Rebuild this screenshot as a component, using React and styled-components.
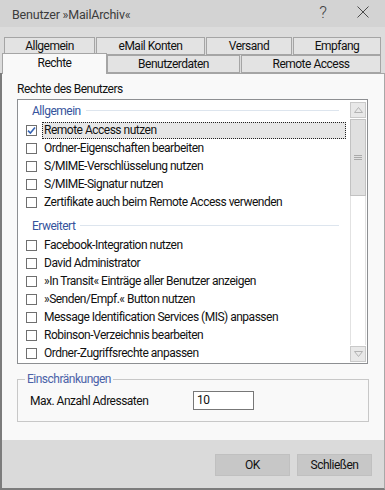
import React from 'react';
import styled, { createGlobalStyle } from 'styled-components';

const Global = createGlobalStyle`
  html, body { margin: 0; padding: 0; background: #dadada; }
  body { font-family: Roboto, "Liberation Sans", sans-serif; font-size: 12px; color: #111; letter-spacing: -0.5px; }
  * { box-sizing: border-box; }
`;

const Window = styled.div`
  width: 385px;
  height: 490px;
  display: flex;
  flex-direction: column;
  background: #dadada;
`;

const TitleBar = styled.div`
  height: 27px;
  display: flex;
  align-items: center;
  padding: 0 16px 0 12px;
  background: #d3d3d3;
  color: #3c3c3c;
  font-size: 12.5px;
  letter-spacing: -0.2px;
`;

const Title = styled.div`
  flex: 1;
  padding-top: 1px;
`;

const TitleButton = styled.div`
  width: ${p => p.$w}px;
  margin-right: ${p => p.$gap || 0}px;
  height: 27px;
  display: flex;
  align-items: center;
  justify-content: center;
  color: #444;
  font-size: 17px;
  font-weight: 300;
  padding-bottom: 3px;
`;

const TabStrip = styled.div`
  height: 46px;
  padding-top: 10px;
  display: flex;
  flex-direction: column;
  background: #dcdcdc;
`;

const TabRow = styled.div`
  display: flex;
  align-items: flex-end;
  height: 18px;
  padding-left: ${p => p.$indent}px;
  position: relative;
  z-index: ${p => p.$z};
`;

const Tab = styled.div`
  width: ${p => p.$w}px;
  margin-right: ${p => p.$gap || 0}px;
  height: ${p => (p.$active ? 21 : 18)}px;
  display: flex;
  align-items: center;
  justify-content: center;
  background: ${p => (p.$active ? '#f9f9f9' : '#e3e3e3')};
  border: 1px solid #a5a5a5;
  border-bottom: ${p => (p.$active ? 'none' : '1px solid #a5a5a5')};
  margin-bottom: ${p => (p.$active ? -1 : 0)}px;
  padding-bottom: ${p => (p.$active ? 2 : 0)}px;
  position: relative;
  z-index: ${p => (p.$active ? 2 : 1)};
`;

const Body = styled.div`
  flex: 1;
  display: flex;
  flex-direction: column;
  border-left: 2px solid #7c7c7c;
  border-right: 1px solid #a8a8a8;
  border-bottom: 2px solid #7c7c7c;
`;

const Panel = styled.div`
  height: 367px;
  background: #f9f9f9;
  border-top: 1px solid #a5a5a5;
  padding: 8px 0 0 15px;
  display: flex;
  flex-direction: column;
`;

const Caption = styled.div`
  line-height: 14px;
  height: 14px;
  margin-bottom: 3px;
`;

const ListBox = styled.div`
  width: 351px;
  height: 265px;
  border: 1px solid #8d8f92;
  background: #fff;
  display: flex;
  overflow: hidden;
`;

const List = styled.div`
  flex: 1;
  display: flex;
  flex-direction: column;
  overflow: hidden;
`;

const GroupHeader = styled.div`
  height: 21px;
  flex: none;
  margin-top: ${p => p.$top}px;
  display: flex;
  align-items: center;
  padding-left: 14px;
  padding-right: 11px;
  color: #35539c;
  line-height: 14px;
`;

const HeaderLine = styled.div`
  flex: 1;
  height: 1px;
  margin-left: 5px;
  background: #dde5ee;
`;

const Row = styled.div`
  height: 18px;
  flex: none;
  display: flex;
  align-items: center;
  padding-left: 8px;
  padding-right: 4px;
`;

const Box = styled.div`
  width: 11px;
  height: 11px;
  border: 1px solid #6f6f6f;
  background: #fff;
  flex: none;
  display: flex;
  align-items: center;
  justify-content: center;
  margin-top: 1px;
`;

const Label = styled.div`
  flex: 1;
  margin-left: 5px;
  height: 17px;
  line-height: 15px;
  padding-left: 1px;
  border: 1px dotted ${p => (p.$focus ? '#222' : 'transparent')};
  background: ${p => (p.$focus ? '#e6e6e6' : 'transparent')};
  white-space: nowrap;
`;

const ScrollBar = styled.div`
  width: 17px;
  flex: none;
  padding: 2px 1px 1px 0;
  display: flex;
  flex-direction: column;
`;

const ArrowButton = styled.div`
  height: 16px;
  flex: none;
  border: 1px solid #c9c9c9;
  background: #e8e8e8;
  display: flex;
  align-items: center;
  justify-content: center;
`;

const Track = styled.div`
  flex: 1;
  display: flex;
  flex-direction: column;
  border-left: 1px solid #e2e2e2;
  border-right: 1px solid #e2e2e2;
  margin: 1px 0;
`;

const Thumb = styled.div`
  height: 77px;
  margin: 0 -1px;
  border: 1px solid #c2c2c2;
  background: #e0e0e0;
  display: flex;
  align-items: center;
  justify-content: center;
`;

const Fieldset = styled.fieldset`
  margin: 8px 0 0 0;
  width: 352px;
  border: 1px solid #c8c8c8;
  padding: 5px 12px 11px 12px;
  display: flex;
  align-items: center;
`;

const Legend = styled.legend`
  color: #4b62a8;
  padding: 0 2px;
  margin-left: -5px;
  line-height: 14px;
`;

const FieldLabel = styled.div`
  width: 163px;
  line-height: 14px;
`;

const Input = styled.div`
  width: 61px;
  height: 19px;
  border: 1px solid #777;
  background: #fff;
  padding-left: 3px;
  line-height: 17px;
`;

const Footer = styled.div`
  flex: 1;
  background: #dadada;
  display: flex;
  justify-content: flex-end;
  align-items: flex-start;
  padding: 14px 12px 0 0;
  gap: 7px;
`;

const Button = styled.div`
  width: 75px;
  height: 22px;
  background: #c7c7c7;
  border: 1px solid #c0c0c0;
  display: flex;
  align-items: center;
  justify-content: center;
`;

const Check = () => (
  <svg width="9" height="9" viewBox="0 0 9 9">
    <path d="M1 4.6 L3.4 7 L8 1.6" fill="none" stroke="#3563b3" strokeWidth="1.6" />
  </svg>
);

const Arrow = ({ down }) => (
  <svg width="9" height="6" viewBox="0 0 9 6">
    <path
      d={down ? 'M0.5 0.5 H8.5 L4.5 5.5 Z' : 'M0.5 5.5 H8.5 L4.5 0.5 Z'}
      fill="none"
      stroke="#b2b2b2"
      strokeWidth="1"
    />
  </svg>
);

const Grip = () => (
  <svg width="8" height="6" viewBox="0 0 8 6">
    <path d="M0 0.5 H8 M0 2.5 H8 M0 4.5 H8" stroke="#a9a9a9" strokeWidth="1" />
  </svg>
);

const CloseX = () => (
  <svg width="12" height="12" viewBox="0 0 12 12">
    <path d="M0.5 0.5 L11.5 11.5 M11.5 0.5 L0.5 11.5" stroke="#4a4a4a" strokeWidth="1" />
  </svg>
);

const groups = [
  {
    title: 'Allgemein',
    items: [
      'Remote Access nutzen',
      'Ordner-Eigenschaften bearbeiten',
      'S/MIME-Verschlüsselung nutzen',
      'S/MIME-Signatur nutzen',
      'Zertifikate auch beim Remote Access verwenden',
    ],
  },
  {
    title: 'Erweitert',
    items: [
      'Facebook-Integration nutzen',
      'David Administrator',
      '»In Transit« Einträge aller Benutzer anzeigen',
      '»Senden/Empf.« Button nutzen',
      'Message Identification Services (MIS) anpassen',
      'Robinson-Verzeichnis bearbeiten',
      'Ordner-Zugriffsrechte anpassen',
    ],
  },
];

export default function App() {
  return (
    <Window>
      <Global />
      <TitleBar>
        <Title>Benutzer »MailArchiv«</Title>
        <TitleButton $w={8} $gap={30}>?</TitleButton>
        <TitleButton $w={12}>
          <CloseX />
        </TitleButton>
      </TitleBar>
      <TabStrip>
        <TabRow $indent={4} $z={1}>
          <Tab $w={91} $gap={1}>Allgemein</Tab>
          <Tab $w={109} $gap={1}>eMail Konten</Tab>
          <Tab $w={86} $gap={1}>Versand</Tab>
          <Tab $w={88}>Empfang</Tab>
        </TabRow>
        <TabRow $indent={2} $z={2}>
          <Tab $w={105} $active>Rechte</Tab>
          <Tab $w={133} $gap={1}>Benutzerdaten</Tab>
          <Tab $w={140}>Remote Access</Tab>
        </TabRow>
      </TabStrip>
      <Body>
        <Panel>
          <Caption>Rechte des Benutzers</Caption>
          <ListBox>
            <List>
              {groups.map((g, gi) => (
                <React.Fragment key={g.title}>
                  <GroupHeader $top={gi === 0 ? 0 : 4}>
                    {g.title}
                    <HeaderLine />
                  </GroupHeader>
                  {g.items.map((it, i) => {
                    const focus = gi === 0 && i === 0;
                    return (
                      <Row key={it}>
                        <Box>{focus && <Check />}</Box>
                        <Label $focus={focus}>{it}</Label>
                      </Row>
                    );
                  })}
                </React.Fragment>
              ))}
            </List>
            <ScrollBar>
              <ArrowButton>
                <Arrow />
              </ArrowButton>
              <Track>
                <Thumb>
                  <Grip />
                </Thumb>
              </Track>
              <ArrowButton>
                <Arrow down />
              </ArrowButton>
            </ScrollBar>
          </ListBox>
          <Fieldset>
            <Legend>Einschränkungen</Legend>
            <FieldLabel>Max. Anzahl Adressaten</FieldLabel>
            <Input>10</Input>
          </Fieldset>
        </Panel>
        <Footer>
          <Button>OK</Button>
          <Button>Schließen</Button>
        </Footer>
      </Body>
    </Window>
  );
}
